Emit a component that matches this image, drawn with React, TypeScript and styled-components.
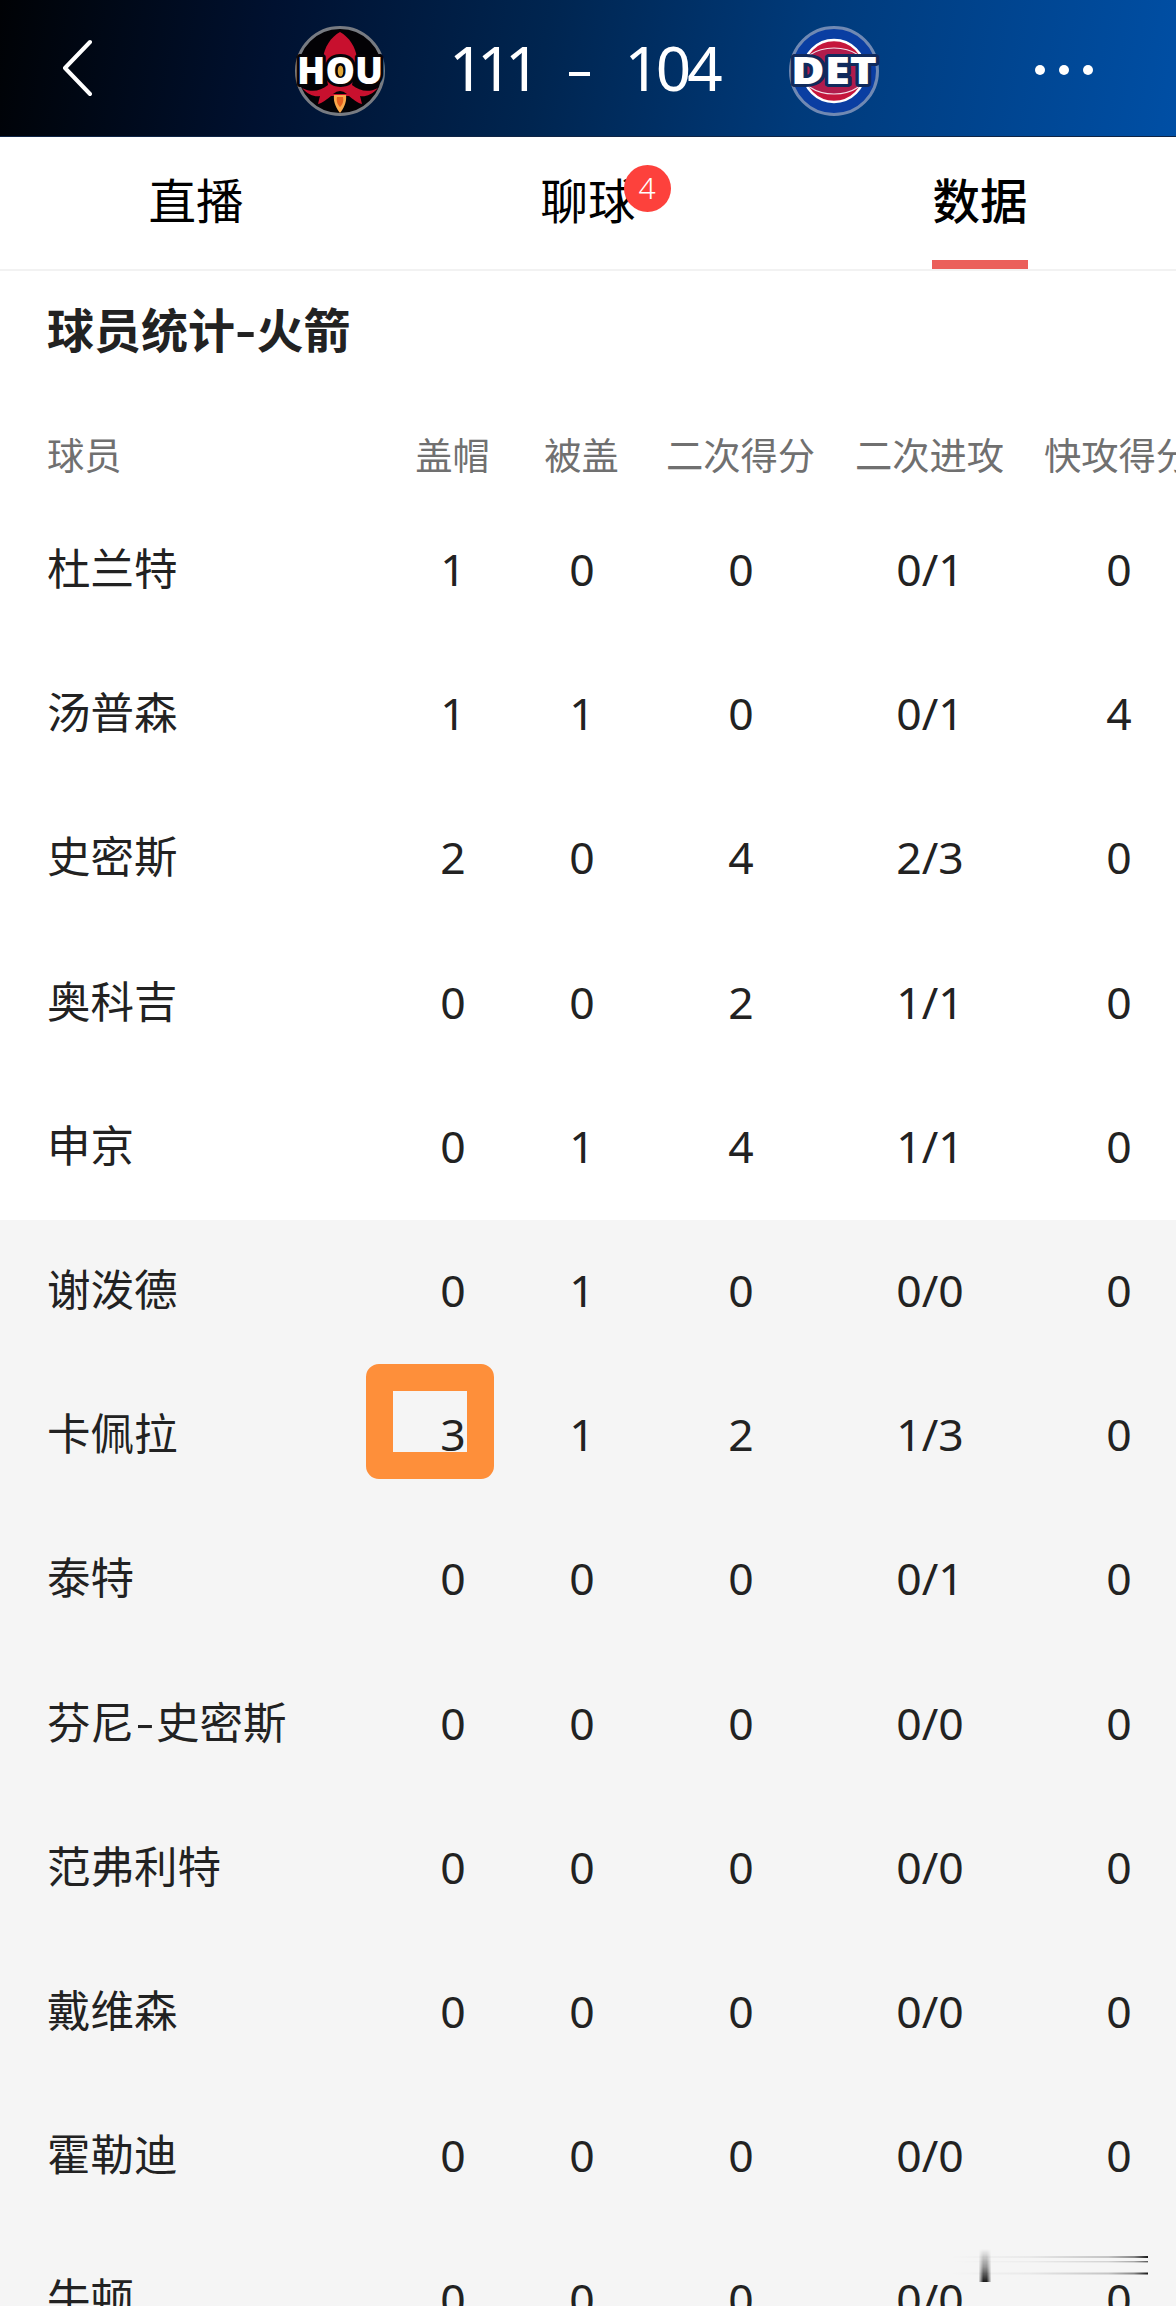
import React from 'react'
import styled, { createGlobalStyle } from 'styled-components';

interface IPlayer {
  name: string;
  stats: string[];
  bench?: boolean;
  marked?: number;
}

const tabs = [
  { label: '直播' },
  { label: '聊球', badge: 4 },
  { label: '数据', active: true },
];

const columns = ['盖帽', '被盖', '二次得分', '二次进攻', '快攻得分'];

const players: IPlayer[] = [
  { name: '杜兰特', stats: ['1', '0', '0', '0/1', '0'] },
  { name: '汤普森', stats: ['1', '1', '0', '0/1', '4'] },
  { name: '史密斯', stats: ['2', '0', '4', '2/3', '0'] },
  { name: '奥科吉', stats: ['0', '0', '2', '1/1', '0'] },
  { name: '申京', stats: ['0', '1', '4', '1/1', '0'] },
  { name: '谢泼德', stats: ['0', '1', '0', '0/0', '0'], bench: true },
  { name: '卡佩拉', stats: ['3', '1', '2', '1/3', '0'], bench: true, marked: 0 },
  { name: '泰特', stats: ['0', '0', '0', '0/1', '0'], bench: true },
  { name: '芬尼-史密斯', stats: ['0', '0', '0', '0/0', '0'], bench: true },
  { name: '范弗利特', stats: ['0', '0', '0', '0/0', '0'], bench: true },
  { name: '戴维森', stats: ['0', '0', '0', '0/0', '0'], bench: true },
  { name: '霍勒迪', stats: ['0', '0', '0', '0/0', '0'], bench: true },
  { name: '牛顿', stats: ['0', '0', '0', '0/0', '0'], bench: true },
];

// a hyphen between two parts of a name is drawn wider than the font has it
const renderName = (name: string) => {
  const [first, last] = name.split('-');
  if (!last) {
    return first;
  }
  return <>{first}<Hyphen $gap={3.5}>-</Hyphen>{last}</>;
}

const RocketsLogo = () => (
  <svg width="94" height="94" viewBox="-47 -47 94 94">
    <circle r="43.5" fill="#030205" stroke="#777b82" strokeWidth="3" />
    <path d="M0 -39 C-9 -34 -16 -24 -17 -12 L-12 14 L12 14 L17 -12 C16 -24 9 -34 0 -39Z" fill="#c8102e" />
    <path d="M-38 17 C-28 22 -20 20 -12 14 L12 14 C20 20 28 22 38 17 C32 24 25 26 20 25 L22 33 C17 32 13 28 9 25 L-9 25 C-13 28 -17 32 -22 33 L-20 25 C-25 26 -32 24 -38 17Z" fill="#c8102e" />
    <path d="M-7 23 Q0 17 7 23Z" fill="#030205" />
    <path d="M-6 24 L6 24 C7 32 3 38 0 42 C-3 38 -7 32 -6 24Z" fill="#f9a84b" />
    <path d="M-3 26 L3 26 C4 31 2 34 0 36 C-2 34 -4 31 -3 26Z" fill="#e5601f" />
    <LogoText x="0" y="13" textLength="86" stroke="#050306">HOU</LogoText>
    <ellipse cx="0.5" cy="0" rx="2.8" ry="5.5" fill="#e2a93b" />
  </svg>
);

const PistonsLogo = () => (
  <svg width="94" height="94" viewBox="-47 -47 94 94">
    <circle r="43.5" fill="#0a3ea2" stroke="#7089b3" strokeWidth="3" />
    <circle r="31" fill="#c5163c" stroke="#fff" strokeWidth="2.4" />
    <clipPath id="ball"><circle r="30" /></clipPath>
    <g clipPath="url(#ball)" fill="#b01c4c" stroke="#f3dfe9" strokeWidth="1.2">
      <ellipse rx="34" ry="23" />
    </g>
    <LogoText x="0" y="13" textLength="86" stroke="#102a5c">DET</LogoText>
  </svg>
);

const App = () => {
  return (
    <>
      <GlobalStyle />
      <Page>
        <Header>
          <BackIcon width="30" height="58" viewBox="0 0 30 58">
            <path d="M28 3 L3 29 L28 55" fill="none" stroke="#fff" strokeWidth="4" strokeLinecap="round" strokeLinejoin="round" />
          </BackIcon>
          <TeamLogo $left={201}><RocketsLogo /></TeamLogo>
          <Score $left={62} $spacing={-7.5}>111</Score>
          <Dash />
          <Score $left={34.5} $spacing={-4}>104</Score>
          <TeamLogo $left={68}><PistonsLogo /></TeamLogo>
          <More>
            <Dot />
            <Dot />
            <Dot />
          </More>
        </Header>
        <TabBar>
          {tabs.map((tab) => (
            <Tab key={tab.label} $active={tab.active}>
              <TabLabel>
                {tab.label}
                {tab.badge && <Badge>{tab.badge}</Badge>}
              </TabLabel>
            </Tab>
          ))}
        </TabBar>
        <Title>球员统计<Hyphen $gap={2}>-</Hyphen>火箭</Title>
        <TableHeader>
          <NameCell>球员</NameCell>
          {columns.map((column) => (
            <Cell key={column}>{column}</Cell>
          ))}
        </TableHeader>
        {players.map((player) => (
          <Row key={player.name} $bench={player.bench}>
            <NameCell>{renderName(player.name)}</NameCell>
            {player.stats.map((stat, i) => (
              <StatCell key={i}>
                {player.marked === i && <Marker />}
                {stat}
              </StatCell>
            ))}
          </Row>
        ))}
        <Streaks width="200" height="40" viewBox="0 0 200 40">
          <defs>
            <linearGradient id="line">
              <stop offset="0" stopColor="#000" stopOpacity="0" />
              <stop offset="0.4" stopColor="#000" stopOpacity="0.05" />
              <stop offset="0.8" stopColor="#000" stopOpacity="0.2" />
              <stop offset="0.93" stopColor="#000" stopOpacity="0.45" />
              <stop offset="1" stopColor="#000" stopOpacity="0.9" />
            </linearGradient>
            <linearGradient id="block" x2="0" y2="1">
              <stop offset="0" stopColor="#000" stopOpacity="0" />
              <stop offset="0.55" stopColor="#000" stopOpacity="0.4" />
              <stop offset="1" stopColor="#000" stopOpacity="0.9" />
            </linearGradient>
            <linearGradient id="edge">
              <stop offset="0" stopColor="#fff" stopOpacity="0.1" />
              <stop offset="0.35" stopColor="#fff" />
              <stop offset="0.65" stopColor="#fff" />
              <stop offset="1" stopColor="#fff" stopOpacity="0.1" />
            </linearGradient>
            <mask id="soft"><rect x="29" y="0" width="12" height="40" fill="url(#edge)" /></mask>
          </defs>
          <rect x="29" y="1" width="12" height="33" fill="url(#block)" mask="url(#soft)" />
          <rect x="0" y="8" width="198" height="2" fill="url(#line)" />
          <rect x="0" y="13" width="198" height="1.4" fill="url(#line)" opacity="0.7" />
          <rect x="0" y="24.5" width="198" height="2" fill="url(#line)" />
        </Streaks>
      </Page>
    </>
  )
}

const GlobalStyle = createGlobalStyle`
  body {
    margin: 0;
    background: #fff;
  }
`;

const Page = styled.div`
  position: relative;
  width: 1176px;
  height: 2306px;
  overflow: hidden;
  background: #fff;
  color: #222;
  font-family: "Noto Sans CJK SC", sans-serif;
`;

const Header = styled.div`
  display: flex;
  align-items: center;
  height: 137px;
  box-sizing: border-box;
  padding: 0 83px 0 62px;
  background: linear-gradient(100deg, #000205 0%, #001130 23%, #002550 46%, #003a7a 68%, #004fa5 100%);
  border-bottom: 1px solid #0e2445;
`;

const BackIcon = styled.svg`
  flex: none;
`;

const TeamLogo = styled.div<{ $left: number }>`
  display: flex;
  margin-left: ${(props) => props.$left}px;
  margin-top: 5px;
`;

const LogoText = styled.text.attrs({ textAnchor: 'middle', lengthAdjust: 'spacingAndGlyphs' })`
  font: 800 37px "Open Sans", sans-serif;
  fill: #fff;
  stroke-width: 6px;
  stroke-linejoin: round;
  paint-order: stroke;
`;

const Score = styled.div<{ $left: number; $spacing: number }>`
  margin-left: ${(props) => props.$left}px;
  margin-top: -2px;
  letter-spacing: ${(props) => props.$spacing}px;
  font-family: "Noto Sans", sans-serif;
  font-size: 62px;
  line-height: 137px;
  color: #fff;
`;

const Dash = styled.div`
  width: 21px;
  height: 4px;
  margin: 12px 0 0 36px;
  background: #fff;
`;

const More = styled.div`
  display: flex;
  gap: 14px;
  margin-left: auto;
  margin-top: 4px;
`;

const Dot = styled.span`
  width: 10px;
  height: 10px;
  border-radius: 50%;
  background: #fff;
`;

const TabBar = styled.div`
  display: flex;
  height: 132px;
  border-bottom: 2px solid #f2f2f2;
`;

const Tab = styled.div<{ $active?: boolean }>`
  flex: 1;
  display: flex;
  justify-content: center;
  font-size: 47.5px;
  line-height: 124px;
  color: #000;
  font-weight: ${(props) => (props.$active ? 500 : 400)};
  background: ${(props) => (props.$active ? 'linear-gradient(#eb5f5b, #eb5f5b) center bottom / 96px 9px no-repeat' : 'none')};
`;

const TabLabel = styled.div`
  position: relative;
`;

const Badge = styled.span`
  position: absolute;
  top: 28px;
  right: -35px;
  width: 47px;
  height: 47px;
  border-radius: 50%;
  background: #fd413c;
  color: #fff;
  font: 300 30px/46px "Noto Sans", sans-serif;
  text-align: center;
`;

const Title = styled.div`
  height: 116px;
  padding-left: 47px;
  font-size: 47px;
  font-weight: 700;
  line-height: 113px;
`;

const Hyphen = styled.span<{ $gap: number }>`
  display: inline-block;
  padding: 0 ${(props) => props.$gap}px;
  transform: scaleX(1.25);
`;

const TableHeader = styled.div`
  display: grid;
  grid-template-columns: 388px 129px 129px 189px 189px 189px;
  height: 112px;
  font-size: 37.3px;
  line-height: 134px;
  color: #707070;
`;

const Row = styled.div<{ $bench?: boolean }>`
  display: grid;
  grid-template-columns: 388px 129px 129px 189px 189px 189px;
  height: 144.2px;
  font-size: 43.5px;
  line-height: 136px;
  background: ${(props) => (props.$bench ? '#f5f5f5' : '#fff')};
`;

const NameCell = styled.div`
  padding-left: 47px;
  white-space: nowrap;
`;

const Cell = styled.div`
  text-align: center;
  white-space: nowrap;
`;

const StatCell = styled(Cell)`
  position: relative;
  padding-left: 1px;
  font-family: "Noto Sans", sans-serif;
  font-size: 44.5px;
  line-height: 139px;
`;

const Marker = styled.span`
  position: absolute;
  top: 0;
  left: -22px;
  box-sizing: border-box;
  width: 128px;
  height: 115px;
  border: 27px solid #fe8f3a;
  border-radius: 13px;
`;

const Streaks = styled.svg`
  position: absolute;
  left: 950px;
  top: 2248px;
`;

export default App
